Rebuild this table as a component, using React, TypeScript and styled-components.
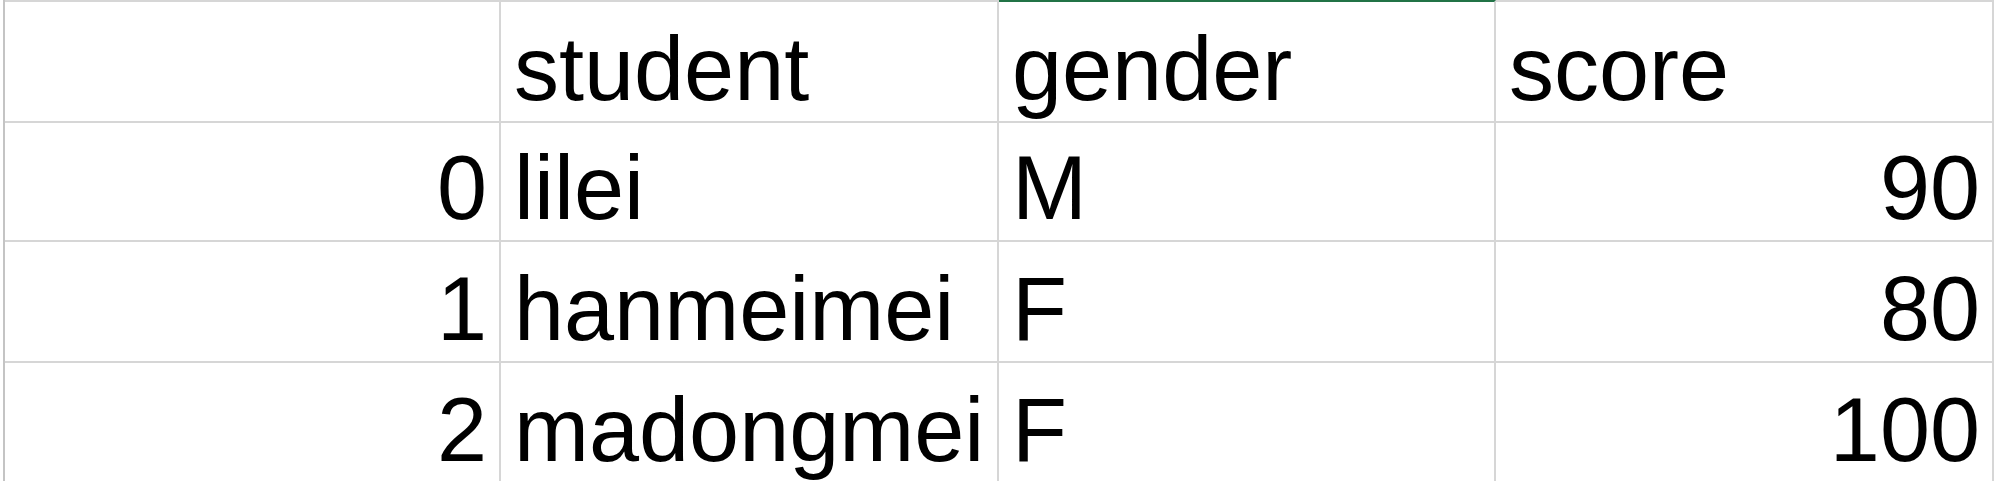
import React from 'react'
import styled, { createGlobalStyle } from 'styled-components'

interface CellProps {
  align?: 'left' | 'right';
  active?: boolean;
}

const columns = ['', 'student', 'gender', 'score']

const rows = [
  { idx: 0, student: 'lilei', gender: 'M', score: 90 },
  { idx: 1, student: 'hanmeimei', gender: 'F', score: 80 },
  { idx: 2, student: 'madongmei', gender: 'F', score: 100 },
]

const App: React.FC = () => {
  return (
    <>
      <GlobalStyle />
      <Sheet>
        <Grid>
          {columns.map((c, i) => (
            <HeadCell key={i} active={c === 'gender'}>
              <Text>{c}</Text>
            </HeadCell>
          ))}
          {rows.map(r => (
            <React.Fragment key={r.idx}>
              <Cell align="right"><Text>{r.idx}</Text></Cell>
              <Cell><Text>{r.student}</Text></Cell>
              <Cell><Text>{r.gender}</Text></Cell>
              <Cell align="right"><Text>{r.score}</Text></Cell>
            </React.Fragment>
          ))}
        </Grid>
      </Sheet>
    </>
  )
}

export default App

const GlobalStyle = createGlobalStyle`
html, body {
  margin: 0;
  padding: 0;
  background: #ffffff;
  overflow: hidden;
}
`

const Sheet = styled.div`
width: 2000px;
height: 481px;
overflow: hidden;
background: #ffffff;
padding-left: 3px;
box-sizing: border-box;
`

const Grid = styled.div`
display: grid;
grid-template-columns: 496px 498px 497px 498px;
grid-auto-rows: 121px;
border-left: 2px solid #c4c4c4;
width: max-content;
`

const Cell = styled.div<CellProps>`
display: flex;
align-items: flex-end;
justify-content: ${p => (p.align === 'right' ? 'flex-end' : 'flex-start')};
box-sizing: border-box;
border-right: 2px solid #d6d6d6;
border-bottom: 2px solid #d6d6d6;
padding: 0 12px 7px 13px;
font-family: "Liberation Sans", Arial, sans-serif;
font-size: 90px;
color: #000000;
white-space: nowrap;
overflow: visible;
`

const HeadCell = styled(Cell)`
height: 123px;
border-top: 2px solid ${p => (p.active ? '#217346' : '#d6d6d6')};
`

const Text = styled.span`
line-height: 90px;
display: block;
`
